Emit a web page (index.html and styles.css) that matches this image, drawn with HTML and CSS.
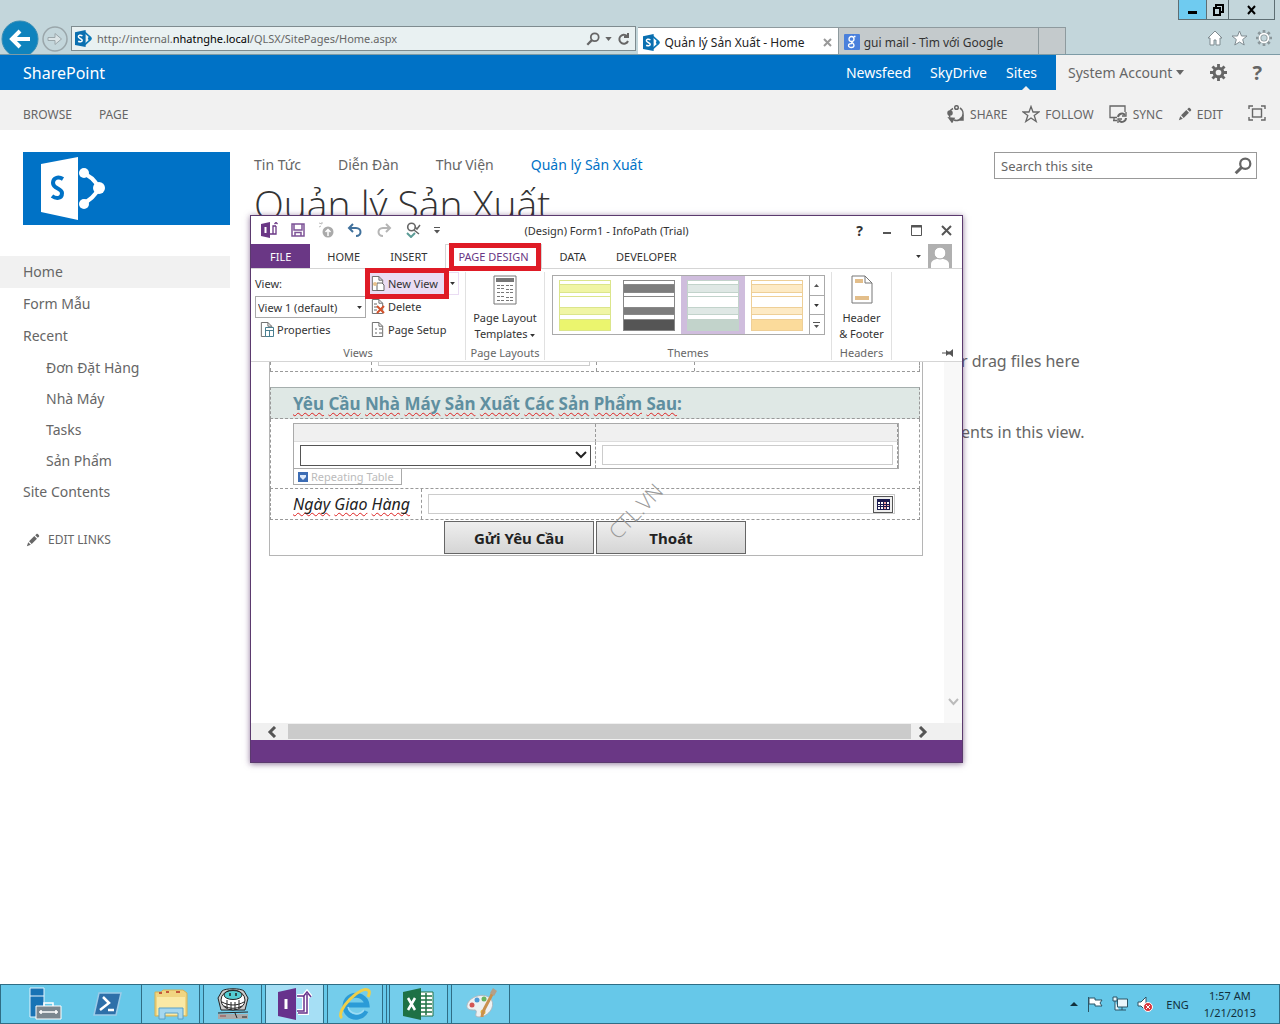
FILE: index.html
```html
<!DOCTYPE html>
<html lang="vi">
<head>
    <meta charset="UTF-8">
    <meta name="viewport" content="width=device-width, initial-scale=1.0">
    <title>Quản lý Sản Xuất - Home</title>
    <link rel="stylesheet" href="styles.css">
</head>
<body>
<svg class="defs" width="0" height="0">
    <symbol id="sp" viewBox="0 0 16 16">
        <path d="M9 2l5 4.500v3L9 14" fill="none" stroke="#0a78b8" stroke-width="1.500"/>
        <circle cx="14" cy="8" r="1.800" fill="#0a78b8"/>
        <path d="M0 2l10-2v16L0 14z" fill="#0a6fb0"/>
        <path d="M7 5.500C5 4.300 3 5 3.200 6.500 3.400 8 6.800 8 6.800 9.700 6.800 11.300 4.500 11.500 3 10.600" fill="none" stroke="#fff" stroke-width="1.400"/>
    </symbol>
    <symbol id="lens" viewBox="0 0 16 16">
        <circle cx="10" cy="6" r="4.500" fill="none" stroke="currentColor" stroke-width="2"/>
        <path d="M7 9L1.500 14.500" stroke="currentColor" stroke-width="2.600"/>
    </symbol>
    <symbol id="pencil" viewBox="0 0 16 16">
        <path d="M1 15l1.500-4.500 3 3zM3.500 9.500l6-6 3 3-6 6zM10.500 2.500l1.500-1.500c1-.8 3.800 2 3 3L13.500 5.500z" fill="currentColor"/>
    </symbol>
    <symbol id="gear" viewBox="0 0 18 18">
        <circle cx="9" cy="9" r="4.600" fill="none" stroke="currentColor" stroke-width="3.200"/>
        <path d="M9 0v4M9 14v4M0 9h4M14 9h4M2.600 2.600l2.800 2.800M12.600 12.600l2.800 2.800M2.600 15.400l2.800-2.800M12.600 5.400l2.800-2.800" stroke="currentColor" stroke-width="3"/>
    </symbol>
    <symbol id="down" viewBox="0 0 8 5"><path d="M0 0h8L4 5z" fill="currentColor"/></symbol>
    <symbol id="page" viewBox="0 0 16 16">
        <path d="M2.500 .5h7l4 4v11h-11zM9.500 .5v4h4" fill="#fff" stroke="#666"/>
    </symbol>
    <symbol id="theme" viewBox="0 0 52 51">
        <rect x=".5" y=".5" width="51" height="50" fill="#fff" stroke="var(--line)"/>
        <rect x="1" y="5" width="50" height="7" fill="var(--band)"/>
        <rect x="1" y="27" width="50" height="8" fill="var(--band)"/>
        <rect x="1" y="39" width="50" height="11" fill="var(--foot)"/>
        <path d="M1 4.500h50M1 12.500h50M1 16.500h50M1 27.500h50M1 34.500h50M1 39.500h50" stroke="var(--line)"/>
    </symbol>
</svg>

<header class="browser">
    <div class="window-buttons">
        <button class="minimize" aria-label="Minimize"><svg width="12" height="10"><path d="M1 6h9v3H1z"/></svg></button>
        <button aria-label="Restore"><svg width="12" height="12" fill="none" stroke="#000" stroke-width="2"><path d="M4 3V1h7v7H9M2 4h6v7H2z"/></svg></button>
        <button class="close" aria-label="Close"><svg width="12" height="10" stroke="#000" stroke-width="2"><path d="M2 1l7 8M9 1L2 9"/></svg></button>
    </div>
    <div class="address-row">
        <button class="back" aria-label="Back"><svg width="38" height="38"><circle cx="19" cy="19" r="18" fill="#0f83bd" stroke="#3a8fb5"/><path d="M29 19H12M19 11l-8 8 8 8" fill="none" stroke="#fff" stroke-width="4"/></svg></button>
        <button class="forward" aria-label="Forward"><svg width="26" height="26" fill="none" stroke="#9aa6aa"><circle cx="13" cy="13" r="12" stroke-width="1.500"/><path d="M6 11.500h7v-4l6.500 5.500-6.500 5.500v-4H6z" fill="#dbe4e6"/></svg></button>
        <div class="address">
            <svg width="17" height="17"><use href="#sp"/></svg>
            <div class="url" contenteditable="true" role="textbox" aria-label="Address">http://internal.<b>nhatnghe.local</b>/QLSX/SitePages/Home.aspx</div>
            <svg width="14" height="14"><use href="#lens"/></svg>
            <svg width="7" height="4"><use href="#down"/></svg>
            <svg width="13" height="14" fill="none" stroke="#666" stroke-width="2"><path d="M10 4a4.500 4.500 0 1 0 1 5"/><path d="M11 1v4H7"/></svg>
        </div>
        <div class="tabs">
            <a href="#" class="tab current"><svg width="17" height="17"><use href="#sp"/></svg><span>Quản lý Sản Xuất - Home</span><svg width="9" height="9" stroke="#999" stroke-width="2"><path d="M1 1l7 7M8 1L1 8"/></svg></a>
            <a href="#" class="tab"><svg width="16" height="16" fill="none" stroke="#fff" stroke-width="1.300"><rect width="16" height="16" rx="1" fill="#4a80dc" stroke="none"/><circle cx="7.500" cy="5" r="2.500"/><path d="M10 2.500h1.500M8 7.500c-1.500 1 2 1.500 2 3.700 0 3-5.500 3-5.500.3 0-1.500 2-2 3.500-1.800"/></svg><span>gui mail - Tìm với Google</span></a>
            <button class="new-tab" aria-label="New tab"></button>
        </div>
        <div class="browser-tools">
            <svg width="16" height="16" fill="#fff" stroke="#7f8b90"><path d="M1 8l7-7 7 7h-2v7h-4v-5H7v5H3V8z"/></svg>
            <svg width="17" height="16" fill="#fff" stroke="#7f8b90"><path d="M8.500 1l2 5h5.500l-4.300 3.500 1.500 5.500-4.700-3-4.700 3 1.500-5.500L1 6h5.500z"/></svg>
            <svg width="16" height="16" viewBox="0 0 18 18" color="#8b979b"><use href="#gear"/><circle cx="9" cy="9" r="5" fill="none" stroke="#fff" stroke-width="2"/></svg>
        </div>
    </div>
</header>

<div class="suite">
    <div class="suite-blue">
        <span class="brand">SharePoint</span>
        <a href="#">Newsfeed</a>
        <a href="#">SkyDrive</a>
        <a href="#" class="here">Sites</a>
    </div>
    <div class="suite-user">
        <button>System Account <svg width="8" height="5"><use href="#down"/></svg></button>
        <svg width="17" height="17"><use href="#gear"/></svg>
        <span class="help">?</span>
    </div>
</div>
<div class="ribbon-bar">
    <a href="#">BROWSE</a>
    <a href="#">PAGE</a>
    <div class="actions">
        <button><svg width="18" height="18" fill="none" stroke="#666" stroke-width="1.500"><path d="M6 3.500a6.500 6.500 0 0 0-3 9M13 3a6.500 6.500 0 0 1 2.500 8M12 15a6.500 6.500 0 0 1-5 0"/><circle cx="9.500" cy="2.500" r="1.800"/><circle cx="3" cy="8" r="2" fill="#666"/><path d="M2 13l5 .500-2 3.500zM12 15l4-4v4z" fill="#666"/></svg>SHARE</button>
        <button><svg width="18" height="18" fill="none" stroke="#666" stroke-width="1.300"><path d="M9 1.500l2 5.500h6l-4.800 3.500 2 6L9 13l-5.200 3.500 2-6L1 7h6z"/></svg>FOLLOW</button>
        <button><svg width="19" height="18" fill="none" stroke="#666" stroke-width="1.300"><path d="M8 12.500H1V1h15v6M4 15.500h4M5 13v2"/><path d="M9 12a4 4 0 0 1 7-2M17 13a4 4 0 0 1-7 2.500" stroke-width="2"/><path d="M17 7v4h-4M9 18v-4h4"/></svg>SYNC</button>
        <button><svg width="14" height="14"><use href="#pencil"/></svg>EDIT</button>
        <svg class="focus" width="18" height="16" fill="none" stroke="#666" stroke-width="1.400"><path d="M1 4V1h4M13 1h4v3M17 12v3h-4M5 15H1v-3"/><rect x="4.500" y="4" width="9" height="8"/></svg>
    </div>
</div>

<div class="site">
    <aside>
        <a href="#" class="logo"><svg width="70" height="66">
            <path d="M41 16c7 2 13 7 17 15-4 8-10 13-17 16" fill="none" stroke="#fff" stroke-width="4"/>
            <circle cx="43" cy="16" r="5" fill="#fff"/><circle cx="58" cy="31" r="6" fill="#fff"/><circle cx="43" cy="47" r="5" fill="#fff"/>
            <path d="M0 7l37-7v63L0 55z" fill="#fff"/>
            <path d="M22 22c-5-3-10-1-10 4 0 6 9 5 9 10 0 6-6 6-10 3" fill="none" stroke="#0072c6" stroke-width="4"/>
        </svg></a>
        <nav>
            <ul>
                <li class="selected"><a href="#">Home</a></li>
                <li><a href="#">Form Mẫu</a></li>
                <li><a href="#">Recent</a>
                    <ul>
                        <li><a href="#">Đơn Đặt Hàng</a></li>
                        <li><a href="#">Nhà Máy</a></li>
                        <li><a href="#">Tasks</a></li>
                        <li><a href="#">Sản Phẩm</a></li>
                    </ul>
                </li>
                <li><a href="#">Site Contents</a></li>
            </ul>
        </nav>
        <button class="edit-links"><svg width="14" height="14"><use href="#pencil"/></svg>EDIT LINKS</button>
    </aside>
    <main>
        <div class="top">
            <nav class="top-nav">
                <a href="#">Tin Tức</a>
                <a href="#">Diễn Đàn</a>
                <a href="#">Thư Viện</a>
                <a href="#" class="here">Quản lý Sản Xuất</a>
            </nav>
            <form class="search">
                <input type="text" placeholder="Search this site" aria-label="Search this site">
                <svg width="18" height="18"><use href="#lens"/></svg>
            </form>
        </div>
        <h1>Quản lý Sản Xuất</h1>
        <p class="drag">r drag files here</p>
        <p class="empty">ents in this view.</p>
    </main>
</div>

<!-- InfoPath designer window -->
<section class="infopath">
    <div class="title-bar">
        <div class="quick">
            <svg width="17" height="16"><path d="M0 2l9-2v16l-9-2z" fill="#6a3785"/><path d="M4.500 5v6" stroke="#fff" stroke-width="2"/><path d="M9 12h3V4h3M13 12h-3M15 4v8h-3M13.500 2L15 .5 16.500 2" fill="none" stroke="#6a3785" stroke-width="1.300"/></svg>
            <svg width="14" height="14" fill="none" stroke="#7d5397" stroke-width="1.500"><path d="M1 1h12v12H1zM3 1v6h8V1M4 13V9.500h6V13"/></svg>
            <svg width="16" height="16"><circle cx="10" cy="10" r="5.500" fill="#aaa"/><path d="M10 14V8M7.500 10L10 7.500l2.500 2.500" fill="none" stroke="#fff" stroke-width="1.500"/><path d="M1 1l3 1M1 5l2-1M4 0v2" stroke="#bbb"/></svg>
            <svg width="16" height="14" fill="none" stroke="#41719c" stroke-width="2"><path d="M6 1L2 5l4 4M2 5h7c6 0 6 8 0 8"/></svg>
            <svg width="16" height="14" fill="none" stroke="#b5b5b5" stroke-width="2"><path d="M10 1l4 4-4 4M14 5H7c-6 0-6 8 0 8"/></svg>
            <svg width="16" height="16" fill="none"><circle cx="6.500" cy="5" r="3.800" stroke="#666" stroke-width="1.600"/><path d="M9 8l5 4M10 5l2 2 3-4" stroke="#666" stroke-width="1.500"/><path d="M2 11l4 4 4-4" stroke="#5c9c97" stroke-width="2"/></svg>
            <svg width="6" height="7"><path d="M0 .5h6" stroke="#555"/><path d="M0 3h6L3 6.500z" fill="#555"/></svg>
        </div>
        <span class="caption">(Design) Form1 - InfoPath (Trial)</span>
        <div class="caption-buttons">
            <button aria-label="Help">?</button>
            <button aria-label="Minimize"><svg width="10" height="12"><path d="M1 8h8v2H1z" fill="#555"/></svg></button>
            <button aria-label="Maximize"><svg width="11" height="11" fill="none" stroke="#555"><path d="M.5 .5h10v10H.5z"/><path d="M0 1.500h11" stroke-width="2"/></svg></button>
            <button aria-label="Close"><svg width="11" height="11" stroke="#555" stroke-width="2"><path d="M1 1l9 9M10 1l-9 9"/></svg></button>
        </div>
    </div>
    <div class="menu">
        <button class="file">FILE</button>
        <button>HOME</button>
        <button>INSERT</button>
        <button class="active marked">PAGE DESIGN</button>
        <button>DATA</button>
        <button>DEVELOPER</button>
        <div class="account">
            <svg width="5" height="3"><use href="#down"/></svg>
            <svg width="24" height="24"><rect width="24" height="24" fill="#b0b0b0"/><circle cx="12" cy="9" r="5.500" fill="#fff"/><path d="M3 24v-4c0-7 18-7 18 0v4z" fill="#fff"/><circle cx="12" cy="9" r="6" fill="none" stroke="#b0b0b0"/></svg>
        </div>
    </div>
    <div class="ribbon">
        <div class="group views">
            <div class="group-body">
                <div class="view-pick">
                    <label for="view">View:</label>
                    <div class="combo">
                        <select id="view"><option>View 1 (default)</option></select>
                        <svg width="5" height="3"><use href="#down"/></svg>
                    </div>
                    <button><svg width="15" height="15"><use href="#page"/><path d="M6.500 5.500h8v9h-8zM6.500 8.500h8M10.500 8v6" fill="#fff" stroke="#4a8091"/></svg>Properties</button>
                </div>
                <div class="view-tools">
                    <div class="split">
                        <button class="new-view marked"><svg width="15" height="15"><use href="#page"/><path d="M7 7h5l2 2v5.500H7z" fill="#fff" stroke="#666"/><circle cx="5" cy="8" r="2" fill="#e8c08c"/></svg>New View</button>
                        <button class="split-arrow" aria-label="New View menu"><svg width="5" height="3"><use href="#down"/></svg></button>
                    </div>
                    <button><svg width="15" height="15"><use href="#page"/><path d="M4 5h3M4 8h3M4 11h3" stroke="#666"/><path d="M7 7l7 7M14 7l-7 7" stroke="#d4532c" stroke-width="2"/></svg>Delete</button>
                    <button><svg width="15" height="15"><use href="#page"/><path d="M5 7h2M5 11h2M9 7h3M9 11h3" stroke="#666"/></svg>Page Setup</button>
                </div>
            </div>
            <div class="group-name">Views</div>
        </div>
        <div class="group layouts">
            <button class="big">
                <svg width="24" height="30" fill="none" stroke="#777"><path d="M1 1h22v28H1z" fill="#fff"/><path d="M3 5h18" stroke-width="4"/><path d="M4 10.500h7M4 13.500h7M4 17.500h7M4 21.500h7M4 25.500h7M13 10.500h7M13 14.500h7M13 17.500h7M13 22.500h7M13 25.500h7" stroke-dasharray="3 1"/></svg>
                <span>Page Layout<br>Templates <svg width="5" height="3"><use href="#down"/></svg></span>
            </button>
            <div class="group-name">Page Layouts</div>
        </div>
        <div class="group themes">
            <div class="gallery">
                <button class="lime" aria-label="Lime"><svg width="52" height="51"><use href="#theme"/></svg></button>
                <button class="dark" aria-label="Dark"><svg width="52" height="51"><use href="#theme"/></svg></button>
                <button class="sage" aria-label="Sage"><svg width="52" height="51"><use href="#theme"/></svg></button>
                <button class="amber" aria-label="Amber"><svg width="52" height="51"><use href="#theme"/></svg></button>
                <div class="gallery-scroll">
                    <button aria-label="Up"><svg width="5" height="3"><path d="M0 3h5L2.500 0z" fill="#555"/></svg></button>
                    <button aria-label="Down"><svg width="5" height="3"><use href="#down"/></svg></button>
                    <button aria-label="More"><svg width="7" height="6"><path d="M0 .5h7" stroke="#555"/><path d="M1 3h5L3.500 6z" fill="#555"/></svg></button>
                </div>
            </div>
            <div class="group-name">Themes</div>
        </div>
        <div class="group headers">
            <button class="big">
                <svg width="22" height="30"><path d="M1 1h13l7 7v20H1zM14 1v7h7" fill="#fff" stroke="#777"/><path d="M4 4h8v4H4zM4 21h14v4H4z" fill="#e3be8a"/></svg>
                <span>Header<br>&amp; Footer</span>
            </button>
            <div class="group-name">Headers</div>
        </div>
        <svg class="pin" width="11" height="8"><path d="M0 3.500h4V1l2 1.500h2L11 0v8L8 5.500H6L4 7V4.500H0z" fill="#555"/></svg>
    </div>
    <div class="canvas">
        <div class="form">
            <div class="cut-row"><div></div><div><i></i></div><div></div><div></div></div>
            <h2><span>Yêu</span> <span>Cầu</span> <span>Nhà</span> <span>Máy</span> <span>Sản</span> <span>Xuất</span> <span>Các</span> <span>Sản</span> <span>Phẩm</span> <span>Sau</span>:</h2>
            <div class="repeat">
                <table>
                    <tr><th></th><th></th></tr>
                    <tr>
                        <td><div class="drop"><select aria-label="Sản Phẩm"><option></option></select><svg width="12" height="8" fill="none" stroke="#222" stroke-width="2"><path d="M1 1l5 5 5-5"/></svg></div></td>
                        <td><input type="text" aria-label="Sản Phẩm"></td>
                    </tr>
                </table>
                <div class="tag"><svg width="10" height="10"><rect width="10" height="10" fill="#3c6cb4"/><path d="M2 3h6v2L5 8 2 5z" fill="#dbe8fa"/></svg>Repeating Table</div>
            </div>
            <div class="date-row">
                <label for="date"><span>Ngày</span> <span>Giao</span> <span>Hàng</span></label>
                <div class="date">
                    <input id="date" type="text">
                    <button aria-label="Calendar"><svg width="13" height="11"><rect width="13" height="11" fill="#1b1b50"/><path d="M1 3h2v2H1zM4 3h2v2H4zM1 6h2v1H1zM4 6h2v1H4zM1 8h2v2H1zM4 8h2v2H4zM10 3h2v2h-2zM10 8h2v2h-2z" fill="#fff"/><path d="M7 3h2v2H7zM7 6h2v1H7zM7 8h2v2H7zM10 6h2v1h-2z" fill="#f4a5a5"/></svg></button>
                </div>
            </div>
            <div class="form-buttons">
                <button>Gửi Yêu Cầu</button>
                <button>Thoát</button>
            </div>
        </div>
        <div class="vscroll"><svg width="11" height="8" fill="none" stroke="#bbb" stroke-width="2"><path d="M1 1l4.500 5L10 1"/></svg></div>
        <span class="watermark">CTL.VN</span>
    </div>
    <div class="hscroll">
        <svg width="10" height="12" fill="none" stroke="#555" stroke-width="3"><path d="M8 1L3 6l5 5"/></svg>
        <div class="thumb"></div>
        <svg width="10" height="12" fill="none" stroke="#555" stroke-width="3"><path d="M2 1l5 5-5 5"/></svg>
    </div>
    <div class="status"></div>
</section>

<footer class="taskbar">
    <button aria-label="Server Manager"><svg width="34" height="34"><path d="M2 1h14v29H2z" fill="#1873b5" stroke="#e4f4fc"/><path d="M2 9h14" stroke="#e4f4fc"/><path d="M8 19h25v13H8z" fill="#7b878f" stroke="#fff"/><path d="M16 19v-3h9v3M11 25h19M13 23v4M28 23v4" fill="none" stroke="#fff" stroke-width="1.500"/></svg></button>
    <button aria-label="PowerShell"><svg width="30" height="26"><path d="M6 2h22l-5 22H1z" fill="#2d6fa9" stroke="#9ccbe8" stroke-width="1.500"/><path d="M10 6l6 6-9 7M15 19h6" fill="none" stroke="#fff" stroke-width="2.500"/></svg></button>
    <button class="running" aria-label="Explorer"><svg width="34" height="32"><path d="M1 4h6l2-2h20l4 3v23H1z" fill="#f0d581" stroke="#d3b155"/><path d="M3 9h28v18H3z" fill="#fae9a5"/><path d="M5 5h3M12 4h3M22 4h4" stroke="#c4593b" stroke-width="2"/><path d="M5 31V20h24v11h-5v-6H11v6z" fill="#a5d7ef" stroke="#5ba1c9"/></svg></button>
    <button class="running" aria-label="Unikey"><svg width="32" height="32" stroke="#222"><path d="M5 3c3-3 19-3 22 0l4 7-3 12H4L1 10z" fill="#ccc"/><ellipse cx="16" cy="12" rx="12" ry="10" fill="#fff"/><ellipse cx="16" cy="7" rx="9" ry="4.500" fill="#54cdd2"/><path d="M13 5v3M19 5v3" stroke-width="1.500"/><path d="M5 14c7 4 15 4 22 0M7 18c6 3 12 3 18 0M10 12v8M14 14v8M18 14v8M22 12v8M1 25l30-1" fill="none"/><path d="M1 26h30v5H1z" fill="#aaa" stroke="none"/><path d="M3 28h6" stroke="#944"/><path d="M18 25l2 5M25 29h5"/></svg></button>
    <button class="running front" aria-label="InfoPath"><svg width="34" height="32"><path d="M0 4l18-4v32L0 28z" fill="#67328c"/><path d="M8 11v10" stroke="#fff" stroke-width="3"/><path d="M19 8h7v15h-7M20 25h9V6M25 9l4-5 4 5" fill="none" stroke="#fff" stroke-width="4"/><path d="M19 8h7v15h-7M20 25h9V6M25 9l4-5 4 5" fill="none" stroke="#67328c" stroke-width="1.500"/></svg></button>
    <button class="running stacked" aria-label="Internet Explorer"><svg width="34" height="32" fill="none"><path d="M28 23a11 11 0 1 1 1-6H9" stroke="#2b9bd7" stroke-width="5"/><path d="M26 22a9 9 0 0 1-16-3" stroke="#9bdcf5" stroke-width="1.500"/><path d="M4 30C-4 24 24-5 31 3c1 2 0 4-1 6" stroke="#efcf4a" stroke-width="3"/></svg></button>
    <button class="running" aria-label="Excel"><svg width="32" height="32"><path d="M16 4h14v24H16z" fill="#fff" stroke="#217346"/><path d="M18 8h11M18 12h11M18 16h11M18 20h11M18 24h11M23 5v22" stroke="#217346" stroke-width="1.500"/><path d="M0 4l18-4v32L0 28z" fill="#1e7145"/><path d="M5 10l7 12M12 10L5 22" stroke="#fff" stroke-width="2.500"/></svg></button>
    <button class="running" aria-label="Paint"><svg width="32" height="32"><path d="M2 17c2-8 16-13 23-7 7 7-1 19-11 19-7 0 0-6-4-7-4 0-9 0-8-5z" fill="#eef1f2" stroke="#aab8c0"/><circle cx="7" cy="17" r="2.500" fill="#d35555"/><circle cx="12" cy="12" r="2.500" fill="#4c9bd8"/><circle cx="19" cy="11" r="2.500" fill="#67b461"/><circle cx="18" cy="24" r="2.500" fill="#e5b53e"/><path d="M17 29c0-7 6-13 11-25" fill="none" stroke="#c9904d" stroke-width="3"/><path d="M25 5l3-5 4 3-3 5z" fill="#b3a089"/></svg></button>
    <div class="tray">
        <svg width="8" height="4"><path d="M0 4h8L4 0z" fill="#12303c"/></svg>
        <svg width="16" height="16" fill="#fff" stroke="#2b5566"><path d="M1.500 1v15M2 2h6v2h7l-2 3 2 3H8V8H2z"/></svg>
        <svg width="16" height="16" fill="#e8f6fb" stroke="#2b5566"><path d="M5.500 3h10v8h-10zM7 14h7M10 11v3M1 1h4v4H1zM3 5v9h4"/></svg>
        <svg width="16" height="16" fill="#fff" stroke="#2b5566"><path d="M1 6h3l5-5v14l-5-5H1z"/><circle cx="11" cy="11" r="4.500" fill="#d8353c" stroke="#fff"/><path d="M9 9l4 4M13 9l-4 4" stroke="#fff"/></svg>
        <span class="lang">ENG</span>
        <span class="clock">1:57 AM<br>1/21/2013</span>
    </div>
</footer>
</body>
</html>
```
FILE: styles.css
```css
* {
    box-sizing: border-box;
}

body {
    margin: 0;
    min-height: 100vh;
    display: flex;
    flex-direction: column;
    position: relative;
    font-family: "Noto Sans", "Open Sans", sans-serif;
    font-size: 14px;
    color: #666;
    background: #fff;
}

.defs {
    position: absolute;
}

a {
    color: inherit;
    text-decoration: none;
}

button {
    display: flex;
    align-items: center;
    margin: 0;
    padding: 0;
    border: 0;
    background: none;
    font: inherit;
    color: inherit;
    white-space: nowrap;
}

input, select {
    font: inherit;
    color: inherit;
    min-width: 0;
    margin: 0;
    border-radius: 0;
}

svg {
    flex: none;
}

/* browser chrome */
.browser {
    background: #c3d6db;
    border-bottom: 1px solid #7d9ba6;
}

.window-buttons {
    display: flex;
    justify-content: flex-end;
    height: 20px;
    padding-right: 5px;
}

.window-buttons button {
    width: 22px;
    justify-content: center;
    border: 1px solid #5e6e73;
    border-width: 0 1px 1px 0;
}

.window-buttons .minimize {
    width: 29px;
    border-left-width: 1px;
    background: #6fcbf0;
}

.window-buttons .close {
    width: 46px;
}

.address-row {
    display: flex;
    height: 34px;
    align-items: flex-end;
    overflow: hidden;
}

.back {
    align-self: flex-start;
    margin-left: 1px;
}

.forward {
    margin: 0 3px 2px;
}

.address {
    flex: 555;
    height: 25px;
    margin-bottom: 3px;
    padding: 0 5px 0 3px;
    display: flex;
    align-items: center;
    gap: 5px;
    border: 1px solid #7e8b8f;
    background: #e9f1f2;
    font-size: 11px;
}

.url {
    flex: 1;
    white-space: nowrap;
}

.url b {
    font-weight: normal;
    color: #000;
}

.tabs {
    flex: 427;
    display: flex;
    height: 27px;
    margin-left: 2px;
}

.tab {
    flex: 1;
    display: flex;
    align-items: center;
    gap: 4px;
    padding: 2px 6px 0 5px;
    border: 1px solid #8e9a9e;
    border-width: 1px 1px 0 0;
    background: #c4cacc;
    color: #333;
    font-size: 12px;
    white-space: nowrap;
}

.tab.current {
    background: #fff;
    color: #222;
}

.tab span {
    flex: 1;
}

.new-tab {
    width: 27px;
    border: 1px solid #8e9a9e;
    border-width: 1px 1px 0 0;
    background: #c4cacc;
}

.browser-tools {
    flex: 206;
    display: flex;
    justify-content: flex-end;
    gap: 8px;
    padding: 0 8px 8px 0;
}

/* sharepoint page */
.suite {
    display: flex;
    height: 35px;
    background: #f1f1f1;
}

.suite-blue {
    flex: 1;
    display: flex;
    align-items: center;
    gap: 19px;
    padding: 0 19px 0 23px;
    background: #0072c6;
    color: #fff;
}

.suite-blue .brand {
    flex: 1;
    font-size: 16px;
}

.suite-blue .here {
    position: relative;
}

.suite-blue .here::after {
    content: "";
    position: absolute;
    left: 50%;
    bottom: -8px;
    border: 4px solid transparent;
    border-top: 0;
    border-bottom-color: #f1f1f1;
}

.suite-user {
    display: flex;
    align-items: center;
    width: 224px;
    padding: 0 18px 0 12px;
    justify-content: space-between;
}

.suite-user button svg {
    margin-left: 4px;
}

.help {
    font-size: 20px;
    font-weight: bold;
}

.ribbon-bar {
    display: flex;
    align-items: center;
    gap: 27px;
    height: 40px;
    padding: 8px 14px 0 23px;
    background: #f1f1f1;
    font-size: 12px;
}

.actions {
    flex: 1;
    display: flex;
    justify-content: flex-end;
    gap: 15px;
}

.actions button {
    gap: 5px;
}

.actions .focus {
    margin-left: 10px;
}

.site {
    flex: 1;
    display: flex;
    padding-top: 22px;
}

aside {
    width: 230px;
}

.logo {
    display: block;
    height: 73px;
    margin-left: 23px;
    padding: 5px 18px;
    background: #0072c6;
}

aside nav {
    margin-top: 31px;
}

aside ul {
    margin: 0;
    padding: 0;
    list-style: none;
}

aside li a {
    display: block;
    padding-left: 23px;
    line-height: 32px;
}

aside li li a {
    padding-left: 46px;
    line-height: 31px;
}

.selected {
    background: #f1f1f1;
}

.edit-links {
    gap: 8px;
    margin: 23px 0 0 26px;
    font-size: 12px;
}

main {
    flex: 1;
    padding-left: 24px;
}

.top {
    display: flex;
    justify-content: space-between;
    padding-right: 23px;
}

.top-nav {
    display: flex;
    gap: 37px;
    line-height: 26px;
}

.top-nav .here {
    color: #0072c6;
}

.search {
    display: flex;
    align-items: center;
    width: 263px;
    height: 27px;
    padding-right: 4px;
    border: 1px solid #999;
}

.search input {
    flex: 1;
    padding: 0 6px;
    border: 0;
    outline: 0;
    background: none;
    font-size: 13px;
}

.search input::placeholder {
    color: #666;
}

h1 {
    margin: 0;
    font-family: "Open Sans", "Noto Sans", sans-serif;
    font-size: 39px;
    font-weight: 300;
    line-height: 50px;
    color: #333;
}

.drag, .empty {
    margin: 0;
    padding-left: 707px;
    font-size: 16px;
    line-height: 24px;
    white-space: nowrap;
}

.drag {
    margin-top: 120px;
}

.empty {
    margin-top: 47px;
}

/* infopath window */
.infopath {
    position: absolute;
    left: 250px;
    top: 215px;
    width: 713px;
    height: 548px;
    display: flex;
    flex-direction: column;
    border: 1px solid #5b3a6e;
    background: #fff;
    color: #333;
    font-size: 11px;
    box-shadow: 0 1px 6px rgba(70, 30, 90, 0.6);
}

.title-bar {
    display: flex;
    align-items: center;
    height: 28px;
    padding: 0 10px;
}

.quick, .caption-buttons {
    flex: 1;
    display: flex;
    align-items: center;
    gap: 13px;
}

.caption-buttons {
    justify-content: flex-end;
    gap: 19px;
}

.caption-buttons button:first-child {
    font-size: 14px;
    font-weight: bold;
}

.menu {
    display: flex;
    height: 25px;
    border-bottom: 1px solid #d5d5d5;
}

.menu button {
    padding: 0 15px;
}

.menu .file {
    padding: 0 19px;
    margin-right: 2px;
    background: #6a3785;
    color: #fff;
}

.menu .active {
    padding: 0 12px;
    margin: 0 3px;
    color: #6a3785;
    background: #fff;
    border: 1px solid #d5d5d5;
    border-bottom: 0;
}

.marked {
    position: relative;
}

.marked::after {
    content: "";
    position: absolute;
    inset: -2px 0 -3px 3px;
    border: 5px solid #df1b26;
    z-index: 1;
}

.account {
    flex: 1;
    display: flex;
    align-items: center;
    justify-content: flex-end;
    gap: 7px;
    padding-right: 10px;
}

.ribbon {
    display: flex;
    position: relative;
    height: 93px;
    border-bottom: 1px solid #d5d5d5;
}

.group {
    display: flex;
    flex-direction: column;
    justify-content: space-between;
    align-items: center;
    margin: 3px 0 1px;
    padding-top: 3px;
    border-right: 1px solid #e1e1e1;
}

.group-name {
    line-height: 14px;
    color: #666;
}

.group-body {
    display: flex;
    align-self: stretch;
    gap: 4px;
    padding-left: 4px;
}

.views {
    width: 215px;
    padding-top: 0;
}

.view-pick {
    width: 111px;
}

.view-pick label {
    display: block;
    line-height: 24px;
}

.combo, .drop {
    display: flex;
    align-items: center;
    position: relative;
}

.combo svg, .drop svg {
    position: absolute;
    right: 4px;
    pointer-events: none;
}

.combo select {
    appearance: none;
    width: 100%;
    height: 22px;
    padding: 0 2px;
    border: 1px solid #aaa;
    background: #fff;
}

.view-pick button, .view-tools button {
    height: 23px;
    gap: 3px;
}

.view-pick button {
    padding-left: 4px;
}

.split {
    display: flex;
}

.view-tools .new-view {
    padding-right: 8px;
    background: #eadcf3;
}

.new-view.marked::after {
    inset: -4px -3px -4px -5px;
}

.split-arrow {
    padding: 0 3px;
    border: 1px solid #eadcf3;
}

.layouts {
    width: 79px;
}

.big {
    flex-direction: column;
    gap: 5px;
    line-height: 16px;
}

.big span svg {
    vertical-align: middle;
}

.themes {
    width: 287px;
}

.gallery {
    display: flex;
    height: 60px;
    border: 1px solid #aaa;
}

.gallery > button {
    width: 64px;
    justify-content: center;
}

.lime {
    --band: #f0f5a5;
    --foot: #ebf56e;
    --line: #dbe58b;
}

.dark {
    --band: #7d7d7d;
    --foot: #555;
    --line: #888;
}

.sage {
    --band: #dfe8e5;
    --foot: #c2d3cb;
    --line: #c2d3cb;
    background: #cfbddd;
}

.amber {
    --band: #fdeac5;
    --foot: #fbdb9b;
    --line: #eecf97;
}

.gallery-scroll {
    display: flex;
    flex-direction: column;
    width: 15px;
}

.gallery-scroll button {
    flex: 1;
    justify-content: center;
    border-left: 1px solid #aaa;
    border-bottom: 1px solid #aaa;
}

.gallery-scroll button:last-child {
    border-bottom: 0;
}

.headers {
    width: 60px;
}

.pin {
    position: absolute;
    right: 9px;
    bottom: 4px;
}

.canvas {
    flex: 1;
    display: flex;
    justify-content: space-between;
    position: relative;
    padding-left: 18px;
}

.form {
    width: 654px;
    align-self: flex-start;
    padding-right: 2px;
    border: 1px solid #b5b5b5;
    border-top: 0;
}

.cut-row {
    display: grid;
    grid-template-columns: 101px 225px 98px 225px;
    height: 10px;
    border: 1px dashed #999;
    border-top: 0;
    border-left: 0;
}

.cut-row div {
    border-left: 1px dashed #999;
}

.cut-row i {
    display: block;
    height: 4px;
    margin: 0 6px;
    border: 1px solid #ccc;
    border-top: 0;
}

h2 {
    margin: 15px 0 0;
    padding-left: 22px;
    height: 32px;
    border: 1px dashed #999;
    border-top: 1px solid #a5aead;
    background: #dfe8e5;
    color: #5f8fa0;
    font-size: 17px;
    line-height: 31px;
}

h2 span, .date-row label span {
    text-decoration: underline wavy #d22 1px;
    text-underline-offset: 2px;
    text-decoration-skip-ink: none;
}

.repeat {
    height: 70px;
    padding: 4px 20px 0 22px;
    border: 1px dashed #999;
    border-width: 0 1px 1px;
}

.repeat table {
    width: 100%;
    table-layout: fixed;
    border: 1px solid #aaa;
    border-spacing: 0;
}

.repeat th {
    height: 18px;
    padding: 0;
    background: #f0f0f0;
    border-bottom: 1px solid #ddd;
    border-right: 1px dashed #999;
}

.repeat td {
    height: 26px;
    padding: 0 4px 0 6px;
    border-right: 1px dashed #999;
}

.repeat select {
    appearance: none;
    width: 100%;
    height: 21px;
    border: 1px solid #555;
    background: #fff;
}

.repeat input, .date input {
    display: block;
    width: 100%;
    height: 20px;
    border: 1px solid #ccc;
    background: #fff;
}

.tag {
    display: inline-flex;
    align-items: center;
    gap: 3px;
    height: 16px;
    padding: 0 7px 0 4px;
    border: 1px solid #aaa;
    border-top: 0;
    color: #bbb;
    font-size: 11px;
}

.date-row {
    display: flex;
    height: 31px;
    border: 1px dashed #999;
    border-top: 0;
}

.date-row label {
    width: 151px;
    padding-left: 22px;
    border-right: 1px dashed #999;
    color: #222;
    font-size: 16px;
    font-style: italic;
    line-height: 31px;
    white-space: nowrap;
}

.date {
    flex: 1;
    display: flex;
    align-items: center;
    position: relative;
    padding: 0 24px 0 6px;
}

.date button {
    position: absolute;
    right: 26px;
    width: 20px;
    height: 17px;
    justify-content: center;
    border: 1px solid #555;
    background: #eee;
}

.form-buttons {
    display: flex;
    justify-content: center;
    gap: 2px;
    padding: 1px 0;
}

.form-buttons button {
    width: 150px;
    height: 33px;
    justify-content: center;
    border: 1px solid #666;
    background: linear-gradient(#eee, #d5d5d5);
    color: #222;
    font-size: 15px;
    font-weight: bold;
}

.vscroll {
    width: 18px;
    display: flex;
    align-items: flex-end;
    justify-content: center;
    padding-bottom: 17px;
    background: #f8f8f8;
}

.watermark {
    position: absolute;
    left: 351px;
    top: 135px;
    color: #999;
    font-family: "Open Sans", sans-serif;
    font-size: 21px;
    font-weight: 300;
    transform: rotate(-46deg);
}

.hscroll {
    display: flex;
    align-items: center;
    gap: 11px;
    height: 17px;
    padding: 0 34px 0 16px;
    background: #f0f0f0;
}

.thumb {
    flex: 1;
    height: 15px;
    background: #cbcbcb;
}

.thumb + svg {
    margin-left: -4px;
}

.status {
    height: 22px;
    background: #6a3785;
}

/* taskbar */
.taskbar {
    display: flex;
    height: 40px;
    padding-left: 14px;
    gap: 3px;
    background: #66c8e9;
    border: 1px solid #2f6d85;
    color: #12303c;
    font-size: 11px;
}

.taskbar button {
    width: 60px;
    justify-content: center;
}

.taskbar .running {
    width: 59px;
    border: 1px solid #2f6d85;
    border-width: 0 1px;
    background: #74cdeb;
}

.taskbar .front {
    background: #a6dff5;
}

.taskbar .stacked {
    width: 56px;
    margin-right: 3px;
    box-shadow: 3px 0 #66c8e9, 4px 0 #2f6d85;
}

.tray {
    flex: 1;
    display: flex;
    align-items: center;
    justify-content: flex-end;
    gap: 9px;
    padding-right: 23px;
}

.lang {
    margin: 0 6px 0 4px;
}

.clock {
    line-height: 17px;
    text-align: center;
}
```
